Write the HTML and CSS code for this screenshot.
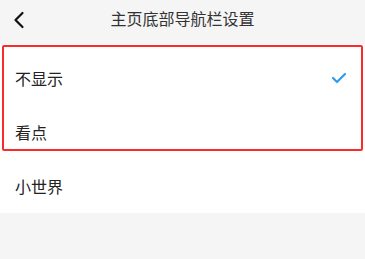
FILE: index.html
```html
<!DOCTYPE html>
<html lang="zh">
<head>
<meta charset="utf-8">
<link rel="stylesheet" href="styles.css">
</head>
<body>
<div class="page">
  <header class="bar">
    <svg class="back" width="12" height="18" viewBox="0 0 12 18"><polyline points="9.5,2 2.5,9 9.5,16" fill="none" stroke="#111" stroke-width="2.2" stroke-linecap="round" stroke-linejoin="round"/></svg>
    <div class="title">主页底部导航栏设置</div>
  </header>
  <ul class="list">
    <li class="row"><span>不显示</span>
      <svg class="check" width="16" height="12" viewBox="0 0 16 12"><polyline points="2,6 6,10 14,2" fill="none" stroke="#2f9bef" stroke-width="2.2" stroke-linecap="round" stroke-linejoin="round"/></svg>
    </li>
    <li class="row"><span>看点</span></li>
    <li class="row"><span>小世界</span></li>
  </ul>
  <div class="highlight"></div>
</div>
</body>
</html>
```
FILE: styles.css
```css
html, body {
  margin: 0;
  padding: 0;
  background: #f5f5f5;
}
.page {
  position: relative;
  width: 365px;
  height: 259px;
  font-family: "Noto Sans CJK SC", "Noto Sans", sans-serif;
  overflow: hidden;
}
.bar {
  position: relative;
  height: 44px;
  display: flex;
  align-items: center;
  justify-content: center;
}
.back {
  position: absolute;
  left: 13px;
  top: 11px;
}
.title {
  font-size: 16px;
  color: #333;
  line-height: 20px;
  margin-top: -9px;
}
.list {
  list-style: none;
  margin: 0;
  padding: 7px 0 0;
  background: #fff;
}
.row {
  height: 54px;
  display: flex;
  align-items: center;
  justify-content: space-between;
  padding: 0 18px 0 15px;
  font-size: 16px;
  color: #222;
}
.check {
  margin-right: 0;
}
.highlight {
  position: absolute;
  left: 2px;
  top: 45px;
  width: 357px;
  height: 102px;
  border: 2px solid #fb2b2b;
  border-radius: 2px;
}
```
